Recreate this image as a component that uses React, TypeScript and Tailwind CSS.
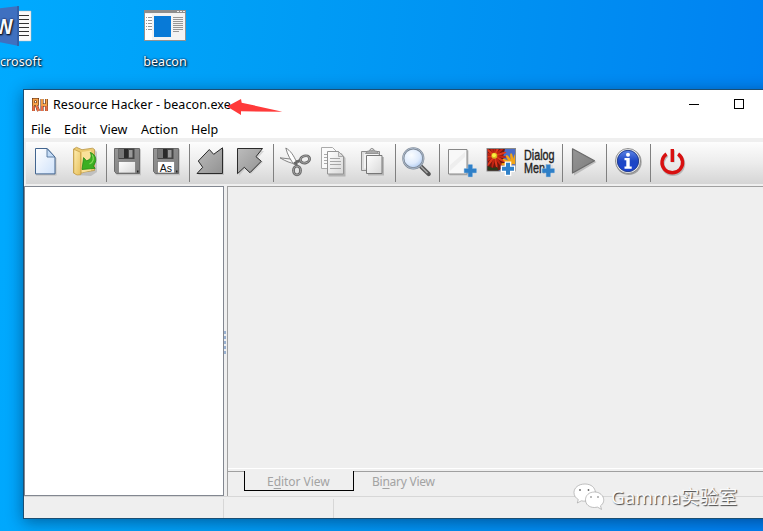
import type { ReactNode } from "react";

const TOOLBAR_TOP = 142;

function Tool({ x, children }: { x: number; children: ReactNode }) {
  return (
    <svg className="block h-[42px] w-[39px] shrink-0 overflow-visible" viewBox={`${x} ${TOOLBAR_TOP} 39 42`}>
      {children}
    </svg>
  );
}

function Separator() {
  return <div className="mt-[2px] h-[38px] w-px shrink-0 bg-[#808080]" />;
}

function Plus({ x, y, outline = false }: { x: number; y: number; outline?: boolean }) {
  const d = `M${x - 2} ${y - 6}h4v4h4v4h-4v4h-4v-4h-4v-4h4z`;
  return <path d={d} fill="#2f80c8" stroke={outline ? "#fff" : "#8ab8e0"} strokeWidth={outline ? 2.6 : 0.8} paintOrder="stroke" />;
}

function Floppy({ x, label }: { x: number; label?: string }) {
  return (
    <g transform={`translate(${x} 148)`}>
      <path d="M1 1.2h26v26H3l-2-2z" fill="#aaa" opacity=".55" />
      <path d="M.5.5h25v25h-23l-2-2z" fill="url(#steel)" stroke="#6c6c6c" />
      <rect x="4.5" y=".5" width="16" height="10.5" fill="#444" />
      <path d="M5 1h5v9H5z" fill="#777" />
      <path d="M10 1h4v9h-4z" fill="#2a2a2a" />
      <rect x="15" y="2" width="3.5" height="7.5" fill="#999" />
      <rect x="4.5" y="13.5" width="17" height="11.5" fill={label ? "#fff" : "url(#paperGrey)"} stroke="#777" strokeWidth=".7" />
      {label && (
        <text x="6.7" y="24" fontFamily="Liberation Sans, sans-serif" fontSize="10.5" fill="#111">
          {label}
        </text>
      )}
      <path d="M23 22.5h1.5v2H23z" fill="#222" />
    </g>
  );
}

function Gradients() {
  return (
    <defs>
      <linearGradient id="steel" x1="0" y1="0" x2="1" y2="1">
        <stop offset="0" stopColor="#969696" />
        <stop offset="1" stopColor="#7c7c7c" />
      </linearGradient>
      <linearGradient id="paperGrey" x1="0" y1="0" x2="1" y2="1">
        <stop offset="0" stopColor="#fff" />
        <stop offset="1" stopColor="#d8d8d8" />
      </linearGradient>
      <linearGradient id="paperBlue" x1="0" y1="0" x2="1" y2="1">
        <stop offset="0" stopColor="#fff" />
        <stop offset="1" stopColor="#cfe2fa" />
      </linearGradient>
      <linearGradient id="gold" x1="0" y1="0" x2="1" y2="1">
        <stop offset="0" stopColor="#ffeeb0" />
        <stop offset="1" stopColor="#e6bf5c" />
      </linearGradient>
      <linearGradient id="arrowGrey" x1="0" y1="0" x2="1" y2="1">
        <stop offset="0" stopColor="#bcbcbc" />
        <stop offset="1" stopColor="#929292" />
      </linearGradient>
      <radialGradient id="lens" cx=".4" cy=".35" r=".7">
        <stop offset="0" stopColor="#fafdff" />
        <stop offset=".6" stopColor="#dfebfc" />
        <stop offset="1" stopColor="#a9c6ef" />
      </radialGradient>
      <linearGradient id="infoBlue" x1="0" y1="0" x2="0" y2="1">
        <stop offset="0" stopColor="#5b84e6" />
        <stop offset=".5" stopColor="#1d46c4" />
        <stop offset="1" stopColor="#1b43d0" />
      </linearGradient>
      <clipPath id="photo">
        <rect x="487.500" y="149" width="27.500" height="21.500" />
      </clipPath>
    </defs>
  );
}

function Toolbar() {
  return (
    <div className="ml-[2px] flex h-[42px] shrink-0 bg-gradient-to-b from-[#fdfdfd] via-[#ececec] to-[#d5d5d5]">
      <div className="flex w-[80px] shrink-0">
        <Tool x={26}>
          <Gradients />
          <path d="M36 149.500h12l8.500 9v17H36z" fill="#aaa" opacity=".6" />
          <path d="M35.500 148.500h11.700l7.800 8.600v16.800H35.500z" fill="url(#paperBlue)" stroke="#42658f" />
          <path d="M47 148.700v8.300h8z" fill="#c5dcf6" stroke="#42658f" strokeWidth=".8" />
        </Tool>
        <Tool x={65}>
          <path d="M77 175l14 1 6-4v-20l-4-4z" fill="#999" opacity=".45" />
          <path d="M73.500 149l3-1.700 5.500 2.400 10.500-1.500 2 1.300v21l-10 1.500-7.500 2.500-3.500-1.500z" fill="#eccb72" stroke="#b99546" strokeWidth=".8" />
          <path d="M73.800 149.300l6.700 2.900.3 22.500-3.800.3-3.200-2z" fill="url(#gold)" stroke="#c39a42" strokeWidth=".7" />
          <path d="M82 152l9-1.500v20l-9 2z" fill="#fae19a" />
          <path d="M90.200 152.400c6 2 7.500 8.800 2.800 13.600l2.200 2.300-13.200 1.200 1.600-11.900 2.900 3.200c4.500-1.300 5.700-4.600 3.700-8.400z" fill="#3caf22" stroke="#208812" strokeWidth=".8" />
          <path d="M92 154.500c2.500 3.500 1.500 7.500-2.500 9.500" fill="none" stroke="#88dc5d" strokeWidth="1.200" />
        </Tool>
      </div>
      <Separator />
      <div className="flex w-[82px] shrink-0">
        <Tool x={107}><Floppy x={114} /></Tool>
        <Tool x={146}><Floppy x={153} label="As" /></Tool>
      </div>
      <Separator />
      <div className="flex w-[83px] shrink-0">
        <Tool x={190}>
          <path d="M198 175l6-7-4-6 11-10 4 4 9-7v26z" fill="#aaa" opacity=".5" />
          <path d="M197 173.500l5.700-6.200-4.400-6.300 11-11.500 4.400 4.800 8.800-6.500v25.700z" fill="url(#arrowGrey)" stroke="#2a2a2a" />
        </Tool>
        <Tool x={229}>
          <path d="M239 176v-25h25l-6 7 5 4-12 12-6-5z" fill="#aaa" opacity=".4" />
          <path d="M237.500 148.500h25l-6.500 8.200 5.300 4.600-11.300 11.400-5.700-5.400-6.800 6.400z" fill="url(#arrowGrey)" stroke="#2a2a2a" />
        </Tool>
      </div>
      <Separator />
      <div className="flex w-[121px] shrink-0">
        <Tool x={274}>
          <path d="M280 157.800l14.500 1.700 5 2.500-4 2c-5-1-9.500-2.500-15.500-6.200z" fill="#f5f5f5" stroke="#777" strokeWidth=".9" />
          <path d="M285.800 148c4.500 2.500 7.700 7 10.700 14l-2 3c-4-5-7-10-8.700-17z" fill="#fff" stroke="#777" strokeWidth=".9" />
          <path d="M294 163.500l6-3.500M295.800 162l1 4" stroke="#666" strokeWidth="2.200" />
          <ellipse cx="305" cy="159.400" rx="4.700" ry="3.500" fill="none" stroke="#666" strokeWidth="2.800" transform="rotate(-15 305 159.400)" />
          <ellipse cx="297" cy="170.500" rx="3.500" ry="4.300" fill="none" stroke="#666" strokeWidth="2.800" />
          <ellipse cx="305" cy="159.400" rx="4.700" ry="3.500" fill="none" stroke="#aaa" strokeWidth=".9" transform="rotate(-15 305 159.400)" />
          <ellipse cx="297" cy="170.500" rx="3.500" ry="4.300" fill="none" stroke="#aaa" strokeWidth=".9" />
        </Tool>
        <Tool x={313}>
          <path d="M321.500 147.500h11l4 4v17h-15z" fill="#fafafa" stroke="#aaa" />
          <path d="M324 154.500h3M324 157.500h3M324 160.500h3M324 163.500h3" stroke="#aaa" />
          <path d="M328.500 153h13l4 5v18.500h-17z" fill="#888" opacity=".5" />
          <path d="M327.500 151.500h11l5 5v17.500h-16z" fill="url(#paperGrey)" stroke="#949494" />
          <path d="M338.500 151.500v5h5z" fill="#ddd" stroke="#949494" strokeWidth=".7" />
          <path d="M330 158.500h10M330 161.500h11M330 164.500h11M330 168.500h11" stroke="#a6a6a6" />
        </Tool>
        <Tool x={352}>
          <path d="M361.500 151.500h18v19h-18z" fill="#ddd" stroke="#8c8c8c" />
          <path d="M364 153.500h14v15h-14z" fill="#f3f3f3" />
          <path d="M365.500 153.500l2-2.500h2c0-3 5-3 5 0h2l2 2.500z" fill="#aaa" stroke="#888" strokeWidth=".8" />
          <circle cx="371.900" cy="149.600" r="1.200" fill="#eee" stroke="#777" strokeWidth=".6" />
          <path d="M368 157h16v18.500h-16z" fill="#999" opacity=".6" />
          <path d="M366.500 155.500h15.500v18h-15.500z" fill="url(#paperGrey)" stroke="#777" />
        </Tool>
      </div>
      <Separator />
      <div className="flex w-[43px] shrink-0">
        <Tool x={396}>
          <path d="M421 166.500l7.700 7.500" stroke="#555" strokeWidth="4.300" strokeLinecap="round" />
          <path d="M420.500 166l7 7" stroke="#aaa" strokeWidth="1.400" />
          <circle cx="413.300" cy="158.300" r="10" fill="url(#lens)" stroke="#7c8795" strokeWidth="2.200" />
          <circle cx="413.300" cy="158.300" r="10.200" fill="none" stroke="#b7c5d6" strokeWidth=".8" />
        </Tool>
      </div>
      <Separator />
      <div className="flex w-[122px] shrink-0">
        <Tool x={440}>
          <path d="M449.500 150.500h19v25h-19z" fill="#aaa" opacity=".6" />
          <path d="M448.500 149.500h18.500v24.500h-18.500z" fill="#f8f8f8" stroke="#888" />
          <path d="M450 165l15-13v5l-15 14z" fill="#eee" />
          <Plus x={470.300} y={170.700} />
        </Tool>
        <Tool x={479}>
          <rect x="487" y="148.500" width="28.500" height="22.500" fill="#4a6cc6" stroke="#888" />
          <g clipPath="url(#photo)">
            <path d="M487 149h18l-2 8 3 8-9 7h-10z" fill="#71180e" />
            {[0, 24, 48, 72, 96, 120, 144, 168, 192, 216, 240, 264, 288, 312, 336].map((a) => (
              <ellipse key={a} cx="494.500" cy="149.500" rx="1.100" ry="6" fill={a % 48 ? "#e0371c" : "#c02413"} transform={`rotate(${a} 494.500 156)`} />
            ))}
            <circle cx="494.300" cy="155.700" r="3" fill="#d8b520" />
            <circle cx="494" cy="155.200" r="1.900" fill="#fff040" />
            {[-85, -60, -35, -10, 15, 40].map((a) => (
              <ellipse key={a} cx="513" cy="158.500" rx="1.400" ry="5.500" fill="#f4a414" transform={`rotate(${a} 513 165)`} />
            ))}
            <path d="M487 166l6 2 4-1 2 5h-12z" fill="#283b1b" />
          </g>
          <Plus x={508} y={168.700} outline />
        </Tool>
        <Tool x={518}>
          <g fontFamily="Liberation Sans, sans-serif" fontSize="15.500" fill="#222" stroke="#222" strokeWidth=".4">
            <text x="524" y="159.700" textLength="30.500" lengthAdjust="spacingAndGlyphs">Dialog</text>
            <text x="524" y="172.700" textLength="27" lengthAdjust="spacingAndGlyphs">Menu</text>
          </g>
          <path d="M545 165h8v5h-8z" fill="#d9dde2" />
          <Plus x={548.300} y={170.700} />
        </Tool>
      </div>
      <Separator />
      <div className="flex w-[43px] shrink-0">
        <Tool x={563}>
          <path d="M574 150.500l22.500 11.500L574 175.500z" fill="#aaa" opacity=".7" />
          <path d="M572.500 148.800l22 12-22 12.200z" fill="url(#steel)" stroke="#6a6a6a" strokeWidth="1.200" strokeLinejoin="round" />
        </Tool>
      </div>
      <Separator />
      <div className="flex w-[43px] shrink-0">
        <Tool x={607}>
          <circle cx="628.700" cy="162" r="13" fill="#777" opacity=".6" />
          <circle cx="628" cy="161" r="12.500" fill="#eee" stroke="#777" strokeWidth=".8" />
          <circle cx="628" cy="161" r="10.700" fill="url(#infoBlue)" stroke="#183486" strokeWidth=".9" />
          <circle cx="628" cy="154.700" r="2" fill="#fff" />
          <path d="M624.500 158h5.200v8.500h2v2.200h-7.200v-2.200h1.800v-6.300h-1.800z" fill="#fff" />
        </Tool>
      </div>
      <Separator />
      <Tool x={651}>
        <path d="M666.500 154.500a10.300 10.300 0 1 0 11.600 0M672.300 149.500v12" fill="none" stroke="#999" strokeWidth="3.800" transform="translate(.7 .8)" opacity=".6" />
        <path d="M666.500 154a10.300 10.300 0 1 0 11.600 0" fill="none" stroke="#d81010" strokeWidth="3.400" />
        <path d="M672.300 149v13" stroke="#d81010" strokeWidth="3.400" />
      </Tool>
    </div>
  );
}

const menus = [
  { name: "File", width: "w-[33px]" },
  { name: "Edit", width: "w-[36px]" },
  { name: "View", width: "w-[41px]" },
  { name: "Action", width: "w-[50px]" },
  { name: "Help", width: "w-[40px]" },
];

function ResourceHackerWindow() {
  return (
    <div className="absolute left-[23px] top-[89px] flex h-[430px] w-[760px] flex-col border border-[#1b4f74] bg-[#efefef] shadow-[0_3px_15px_rgba(0,25,60,0.48)]">
      <div className="flex h-[30px] shrink-0 items-center bg-white pl-[7px] text-[12.5px] text-black">
        <svg className="h-[16px] w-[18px] shrink-0" viewBox="0 0 18 16">
          <path d="M2.500 14V2.500h4v4.500H3M5 7l2.500 7M11 2v12M15.500 2v12M11 8h5" fill="none" stroke="#4a2010" strokeWidth="3" />
          <path d="M2.500 14V2.500h4v4.500H3M5 7l2.500 7M11 2v12M15.500 2v12M11 8h5" fill="none" stroke="#f7a24a" strokeWidth="1.900" />
          <path d="M2.500 9v5M11 9v5M15.500 9v5M5.800 9l1.700 5" stroke="#ec6a48" strokeWidth="1.900" />
        </svg>
        <span className="ml-[4px] w-[178px] shrink-0 whitespace-nowrap tracking-[0.08px]">Resource Hacker - beacon.exe</span>
        <svg className="ml-[458px] h-[12px] w-[56px] shrink-0 overflow-visible" viewBox="689 98 56 12" shapeRendering="crispEdges">
          <path d="M689 103.500h10" stroke="#000" />
          <rect x="734.500" y="98.500" width="9" height="9" fill="none" stroke="#000" />
        </svg>
      </div>
      <div className="flex h-[18px] shrink-0 items-center bg-white pl-[7px] pt-[2px] text-[12.5px] leading-[18px] tracking-[0.02px] text-black">
        {menus.map((m) => (
          <span key={m.name} className={`${m.width} shrink-0`}>{m.name}</span>
        ))}
      </div>
      <div className="h-[4px] shrink-0 bg-[#efefef]" />
      <Toolbar />
      <div className="h-[2px] shrink-0" />
      <div className="flex h-[310px] shrink-0">
        <div className="w-[200px] shrink-0 border border-[#828790] bg-white" />
        <div className="flex w-[3px] shrink-0 flex-col items-start gap-[2px] pt-[145px]">
          {[0, 1, 2, 3, 4].map((n) => (
            <div key={n} className="h-[3px] w-[2px] bg-[#9ab1d0]" />
          ))}
        </div>
        <div className="flex flex-1 flex-col border-l border-t border-[#a0a0a0]">
          <div className="h-[281px] shrink-0" />
          <div className="h-px shrink-0 bg-white" />
          <div className="h-[2px] shrink-0" />
          <div className="flex h-[20px] shrink-0 text-[12px] leading-[20px] text-[#a3a3a3]">
            <div className="w-[16px] border-t border-[#a0a0a0]" />
            <div className="w-[110px] border border-t-0 border-black pl-[22px] pt-px tracking-[-0.04px]">
              E<span className="underline underline-offset-2">d</span>itor View
            </div>
            <div className="flex-1 border-t border-[#a0a0a0] pl-[18px] tracking-[-0.25px]">
              Bi<span className="underline underline-offset-2">n</span>ary View
            </div>
          </div>
        </div>
      </div>
      <div className="flex h-[22px] shrink-0 border-t border-[#d7d7d7]">
        <div className="mt-[2px] h-[19px] w-[200px] border-r border-[#d7d7d7]" />
        <div className="mt-[2px] h-[19px] w-[110px] border-r border-[#d7d7d7]" />
      </div>
    </div>
  );
}

function DesktopIcons() {
  return (
    <div className="flex h-[72px] text-[12.5px] text-white [text-shadow:1px_1px_2px_#000,0_0_2px_#003]">
      <div className="w-[120px]">
        <svg className="block h-[52px] w-[40px]" viewBox="0 0 40 52">
          <path d="M15 11h16v30H15z" fill="#fafafa" stroke="#bbb" strokeWidth=".5" />
          <path d="M17 15.500h12M17 19.500h12M17 23.500h12M17 27.500h12M17 31.500h12M17 35.500h12" stroke="#333" />
          <path d="M-6 9l25-3v40l-25-5z" fill="#3f70c0" />
          <path d="M18 6v40" stroke="#2d5599" strokeWidth="1.200" />
          <text x="-5" y="33.500" fontFamily="Liberation Sans, sans-serif" fontSize="22" fontWeight="700" fill="#f7faff" textLength="18" lengthAdjust="spacingAndGlyphs">W</text>
        </svg>
        <span className="block leading-[20px] tracking-[0.1px]">crosoft</span>
      </div>
      <div className="w-[90px]">
        <svg className="ml-[24px] block h-[52px] w-[42px]" viewBox="144 0 42 52">
          <rect x="144.500" y="10.500" width="41" height="30" fill="#f3f3f3" stroke="#929292" />
          <path d="M144 10h42v3h-42z" fill="#8d8d8d" />
          <path d="M177 11.500h2M180 11.500h2M183 11.500h2" stroke="#eee" />
          <path d="M145 14h7v26h-7z" fill="#fff" />
          <path d="M154 16h17v21h-17z" fill="#087ad7" />
          <path d="M146 17.500h1M148 17.500h4M146 20.500h1M148 20.500h4M146 23.500h1M148 23.500h4M146 26.500h1M148 26.500h4M146 29.500h1M148 29.500h4M173 17.500h10M173 19.500h10M173 21.500h10M173 23.500h10M173 25.500h10M173 27.500h10M173 29.500h10M173 31.500h6" stroke="#969696" />
        </svg>
        <span className="block text-center leading-[20px] tracking-[0.1px]">beacon</span>
      </div>
    </div>
  );
}

export default function App() {
  return (
    <div className="relative h-[531px] w-[763px] overflow-hidden bg-[linear-gradient(95deg,#00aaff_0%,#009ff6_30%,#0090f2_65%,#0080f2_100%)] [font-family:'Noto_Sans','Noto_Sans_CJK_SC',sans-serif]">
      <DesktopIcons />
      <ResourceHackerWindow />
      <svg className="absolute left-[224px] top-[97px] h-[20px] w-[60px]" viewBox="224 97 60 20">
        <path d="M227 106.500l14-7.500.7 3.700 40.800 9-41.500-.4v3.700z" fill="#ff3a3a" />
      </svg>
      <div className="absolute left-[573px] top-[482px] flex h-[30px] items-center text-[18.8px] leading-[30px] text-[#fafafa] [text-shadow:1px_1px_1px_#444]">
        <svg className="h-[30px] w-[32px] shrink-0" viewBox="573 482 32 30">
          <g fill="#fff" stroke="#999" strokeWidth=".6">
            <path d="M585 484c-6.500 0-11 3.800-11 8.500 0 3 1.600 5.500 4.300 7l-1 3.500 4-2.200c5.800 1.300 14-1.100 14-8.300 0-4.700-4-8.500-10.300-8.500z" />
            <path d="M594.500 492c-5.500 0-9 3.400-9 7.800s3.500 7.700 9 7.700l3-.4 4 2.300-1-3.600c6.500-4.500 2.500-13.800-6-13.800z" />
          </g>
          <g fill="#666">
            <circle cx="580" cy="490" r=".9" /><circle cx="588.500" cy="490" r=".9" />
            <circle cx="591" cy="497" r=".8" /><circle cx="598" cy="497" r=".8" />
          </g>
        </svg>
        <span className="ml-[6px] whitespace-nowrap">Gamma实验室</span>
      </div>
    </div>
  );
}
